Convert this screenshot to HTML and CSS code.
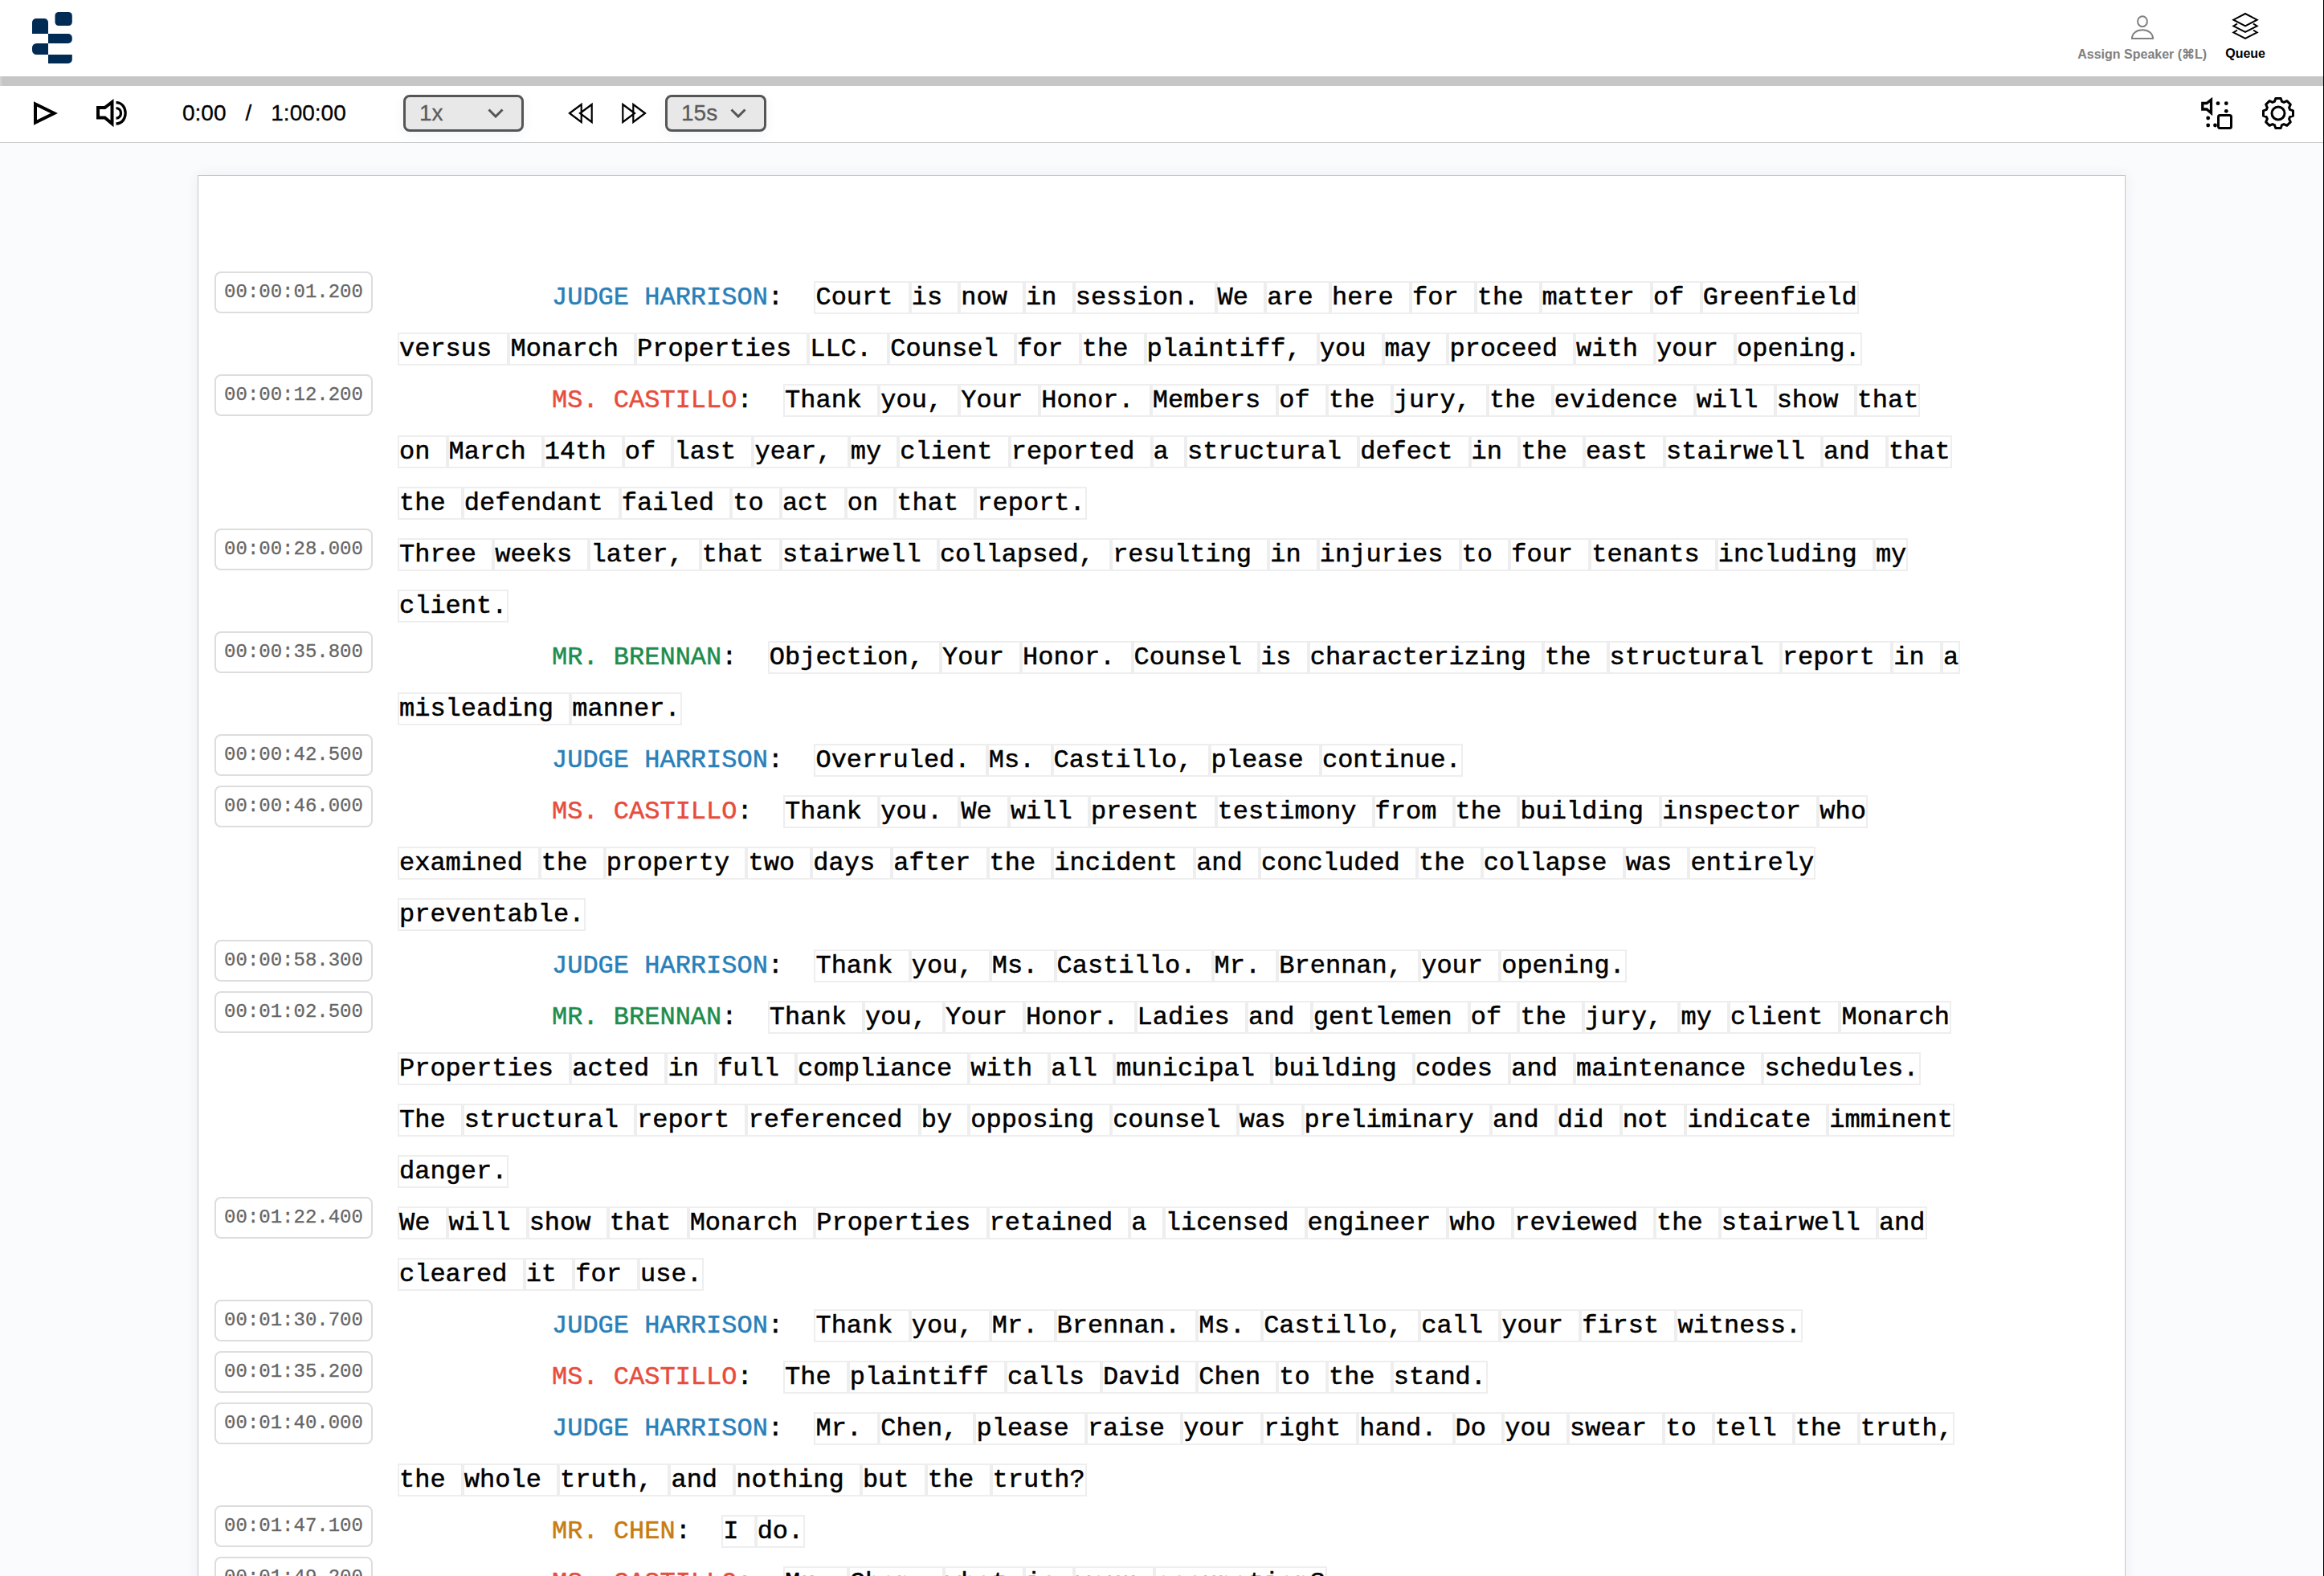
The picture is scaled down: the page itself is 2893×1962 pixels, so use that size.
FILE: index.html
```html
<!DOCTYPE html>
<html lang="en">
<head>
    <meta charset="UTF-8">
    <meta name="viewport" content="width=device-width, initial-scale=1.0">
    <title>Transcript Editor</title>
    <link rel="stylesheet" href="styles.css">
</head>
<body>
    <div class="app">
        <header class="header">
            <svg class="logo" width="50" height="64" viewBox="0 0 50 64">
                <path d="M0 27V13a5 5 0 0 1 5-5h10a5 5 0 0 1 5 5v14z"/>
                <rect x="28.5" y="0" width="21.3" height="17" rx="4.5"/>
                <path d="M20 27h24.8a5 5 0 0 1 5 5v2a5 5 0 0 1-5 5H20z"/>
                <path d="M20 39v14H5.5A5.5 5.5 0 0 1 0 47.5v-3A5.5 5.5 0 0 1 5.5 39z"/>
                <path d="M20 53h29.8v6a5 5 0 0 1-5 5H20z"/>
            </svg>
            <nav class="actions">
                <div class="action disabled">
                    <svg width="30" height="34" viewBox="0 0 30 34">
                        <ellipse cx="15" cy="10.7" rx="5.9" ry="6.5"/>
                        <path d="M2 32c0-6.500 5.500-10.700 13-10.700S28 25.500 28 32z"/>
                    </svg>
                    <span>Assign Speaker (⌘L)</span>
                </div>
                <div class="action">
                    <svg width="34" height="36" viewBox="0 0 34 36">
                        <path d="M17 2l14.700 7.700L17 17.300 2.300 9.700z"/>
                        <path d="M7 14.500l-4.700 3L17 25l14.700-7.500-4.700-3"/>
                        <path d="M7 22.500l-4.700 3L17 33l14.700-7.500-4.700-3"/>
                    </svg>
                    <span>Queue</span>
                </div>
            </nav>
        </header>

        <div class="progress"></div>

        <div class="controls">
            <svg class="play" width="32" height="36" viewBox="0 0 32 36">
                <path d="M4 6.500L27.500 18 4 29.500z"/>
            </svg>
            <svg class="volume" width="44" height="40" viewBox="0 0 44 40">
                <path d="M4 13h8.500l9-7v27l-9-7.500H4z"/>
                <path d="M26.500 13.700c8 0 8 12.500 0 12.500M26.500 6.700c15.500 0 15.500 26.300 0 26.300" stroke-width="3.3"/>
            </svg>
            <div class="time">
                <span>0:00</span>
                <span>/</span>
                <span>1:00:00</span>
            </div>
            <button class="select speed">
                1x
                <svg width="20" height="12" viewBox="0 0 20 12"><path d="M1.500 1.500L10 10l8.500-8.500"/></svg>
            </button>
            <svg class="skip back" width="32" height="28" viewBox="0 0 32 28">
                <path d="M2 14L16.700 3v22zM15 14L29.700 3v22z"/>
            </svg>
            <svg class="skip" width="32" height="28" viewBox="0 0 32 28">
                <path d="M30 14L15.300 3v22zM17 14L2.300 3v22z"/>
            </svg>
            <button class="select step">
                15s
                <svg width="20" height="12" viewBox="0 0 20 12"><path d="M1.500 1.500L10 10l8.500-8.500"/></svg>
            </button>
            <div class="tools">
                <svg width="40" height="40" viewBox="0 0 40 40">
                    <path d="M1.800 7.500H7l5.500-4.300v16.500L7 15H1.800z" stroke-width="3.3"/>
                    <rect x="21.5" y="22.5" width="16" height="16" rx="2"/>
                    <g class="dots">
                        <circle cx="21" cy="7.7" r="2.4"/>
                        <circle cx="31.3" cy="7.7" r="2.4"/>
                        <circle cx="31.3" cy="17.3" r="2.4"/>
                        <circle cx="8.7" cy="26" r="2.4"/>
                        <circle cx="8.7" cy="35" r="2.4"/>
                        <circle cx="17.5" cy="35" r="2.4"/>
                    </g>
                </svg>
                <svg class="gear" width="40" height="40" viewBox="-20 -20 40 40">
                    <circle r="8"/>
                    <path d="M-3.200-18.500L3.200-18.500 4.600-14.600 7.070-13.580 10.820-15.340 15.340-10.820 13.580-7.070 14.600-4.600 18.500-3.200 18.500 3.200 14.600 4.600 13.580 7.070 15.340 10.820 10.820 15.340 7.070 13.580 4.600 14.600 3.200 18.500-3.200 18.500-4.600 14.600-7.070 13.580-10.820 15.340-15.340 10.820-13.580 7.070-14.600 4.600-18.500 3.200-18.500-3.200-14.600-4.600-13.580-7.070-15.340-10.820-10.820-15.340-7.070-13.580-4.600-14.600z"/>
                </svg>
            </div>
        </div>

        <main class="editor">
            <div class="page" id="page"></div>
        </main>
    </div>

    <script src="script.js"></script>
</body>
</html>
```
FILE: styles.css
```css
* {
    box-sizing: border-box;
}
body {
    margin: 0;
    overflow: hidden;
    font-family: "Liberation Sans", Arial, sans-serif;
    color: #000;
}
.app {
    display: flex;
    flex-direction: column;
    height: 100vh;
    border-right: 1px solid #000;
    background: #fff;
}
svg {
    display: block;
    flex: none;
    fill: none;
    stroke: #000;
}

/* Header */
.header {
    display: flex;
    justify-content: space-between;
    height: 95px;
    flex: none;
    padding: 15px 72px 0 40px;
}
.logo {
    fill: #002b55;
    stroke: none;
}
.actions {
    display: flex;
    gap: 23px;
}
.action {
    display: flex;
    flex-direction: column;
    align-items: center;
    font-size: 16px;
    font-weight: bold;
    line-height: 20px;
    white-space: nowrap;
}
.action svg {
    stroke-width: 2;
}
.action span {
    margin-top: 6px;
}
.action.disabled {
    color: #808080;
    padding-top: 1px;
}
.action.disabled svg {
    stroke: #808080;
}
.action.disabled span {
    margin-top: 8px;
}

/* Player */
.progress {
    height: 12px;
    flex: none;
    background: #c6c6c6;
    border-left: 2px solid #d2d2d2;
}
.controls {
    display: flex;
    align-items: center;
    height: 71px;
    flex: none;
    padding: 0 36px 2px 40px;
    border-bottom: 1px solid #c6c7ca;
}
.play {
    stroke-width: 4;
}
.volume {
    margin: 0 65px 0 46px;
    stroke-width: 4;
}
.time {
    display: flex;
    gap: 24px;
    width: 275px;
    font-size: 28px;
    -webkit-text-stroke: 0.3px;
}
.select {
    display: flex;
    align-items: center;
    justify-content: space-between;
    height: 46px;
    padding: 0 22px 0 17px;
    border: 3px solid #555;
    border-radius: 8px;
    background: #e8e8e8;
    color: #5a5a5a;
    font-family: inherit;
    font-size: 28px;
    -webkit-text-stroke: 0.3px;
    box-shadow: 0 4px 16px rgba(20, 60, 120, 0.05);
}
.select svg {
    stroke: #555;
    stroke-width: 3;
}
.speed {
    width: 150px;
}
.step {
    width: 126px;
    margin-left: 23px;
}
.skip {
    stroke-width: 2.2;
}
.skip.back {
    margin: 0 34px 0 55px;
}
.tools {
    display: flex;
    gap: 36px;
    margin-left: auto;
    stroke-width: 3;
}
.dots {
    fill: #000;
    stroke: none;
}
.gear {
    stroke-linejoin: round;
}

/* Transcript */
.editor {
    flex: 1;
    min-height: 0;
    padding-top: 40px;
    background: #fafbfd;
    overflow: hidden;
}
.page {
    width: 2400px;
    min-height: 2600px;
    margin: 0 auto;
    padding: 119px 199px 0 20px;
    border: 1px solid #c6c7ca;
    background: #fff;
    box-shadow: 0 0 16px rgba(30, 50, 90, 0.07);
}
.row {
    display: flex;
    align-items: flex-start;
    gap: 31px;
    font-family: "Liberation Mono", "Courier New", monospace;
    -webkit-text-stroke: 0.5px;
}
.stamp {
    flex: none;
    width: 197px;
    height: 52px;
    border: 2px solid #ddd;
    border-radius: 8px;
    color: #666;
    font-size: 24px;
    line-height: 47px;
    text-align: center;
    -webkit-text-stroke: 0.3px;
}
.text {
    flex: 1;
    margin: 1px 0 -1px;
    font-size: 32px;
    line-height: 64px;
}
.text.spoken {
    text-indent: 192px;
}
.label {
    white-space: pre;
}
.word {
    border: 2px solid #eee;
}
.judge {
    color: #2980b9;
}
.castillo {
    color: #e74c3c;
}
.brennan {
    color: #1e8c4c;
}
.chen {
    color: #c77c0e;
}
```
FILE: script.js
```js
const speakers = {
    judge: 'JUDGE HARRISON',
    castillo: 'MS. CASTILLO',
    brennan: 'MR. BRENNAN',
    chen: 'MR. CHEN'
};

// [start time, speaker key, text], speaker is null when the same person continues
const segments = [
    ['00:00:01.200', 'judge', 'Court is now in session. We are here for the matter of Greenfield versus Monarch Properties LLC. Counsel for the plaintiff, you may proceed with your opening.'],
    ['00:00:12.200', 'castillo', 'Thank you, Your Honor. Members of the jury, the evidence will show that on March 14th of last year, my client reported a structural defect in the east stairwell and that the defendant failed to act on that report.'],
    ['00:00:28.000', null, 'Three weeks later, that stairwell collapsed, resulting in injuries to four tenants including my client.'],
    ['00:00:35.800', 'brennan', 'Objection, Your Honor. Counsel is characterizing the structural report in a misleading manner.'],
    ['00:00:42.500', 'judge', 'Overruled. Ms. Castillo, please continue.'],
    ['00:00:46.000', 'castillo', 'Thank you. We will present testimony from the building inspector who examined the property two days after the incident and concluded the collapse was entirely preventable.'],
    ['00:00:58.300', 'judge', 'Thank you, Ms. Castillo. Mr. Brennan, your opening.'],
    ['00:01:02.500', 'brennan', 'Thank you, Your Honor. Ladies and gentlemen of the jury, my client Monarch Properties acted in full compliance with all municipal building codes and maintenance schedules. The structural report referenced by opposing counsel was preliminary and did not indicate imminent danger.'],
    ['00:01:22.400', null, 'We will show that Monarch Properties retained a licensed engineer who reviewed the stairwell and cleared it for use.'],
    ['00:01:30.700', 'judge', 'Thank you, Mr. Brennan. Ms. Castillo, call your first witness.'],
    ['00:01:35.200', 'castillo', 'The plaintiff calls David Chen to the stand.'],
    ['00:01:40.000', 'judge', 'Mr. Chen, please raise your right hand. Do you swear to tell the truth, the whole truth, and nothing but the truth?'],
    ['00:01:47.100', 'chen', 'I do.'],
    ['00:01:49.200', 'castillo', 'Mr. Chen, what is your occupation?']
];

const page = document.getElementById('page');

function addSpan(parent, className, text) {
    const span = document.createElement('span');
    span.className = className;
    span.textContent = text;
    parent.appendChild(span);
}

segments.forEach(function([time, speaker, text]) {
    const row = document.createElement('div');
    row.className = 'row';
    addSpan(row, 'stamp', time);

    const p = document.createElement('p');
    p.className = 'text';
    if (speaker) {
        p.classList.add('spoken');
        addSpan(p, speaker, speakers[speaker]);
        addSpan(p, 'label', ':  ');
    }

    // The space stays inside the word box, except after the last word
    const words = text.split(' ');
    words.forEach(function(word, i) {
        addSpan(p, 'word', i < words.length - 1 ? word + ' ' : word);
    });

    row.appendChild(p);
    page.appendChild(row);
});
```
